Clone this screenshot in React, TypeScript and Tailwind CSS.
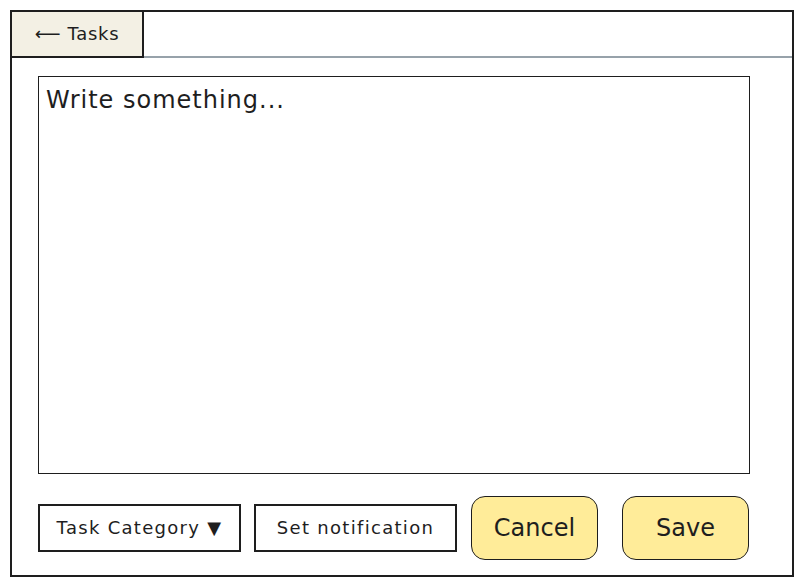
import React from "react";

export default function App() {
  const font = { fontFamily: '"DejaVu Sans", "Noto Sans", sans-serif' };
  return (
    <div className="w-[804px] h-[586px] bg-white p-[10px]" style={font}>
      <div className="w-[784px] h-[567px] border-2 border-[#1e1e1e] flex flex-col">
        <div className="flex h-[46px] shrink-0">
          <div className="w-[132px] bg-[#f3f0e4] border-r-2 border-b-2 border-[#1e1e1e] flex items-center justify-center pb-[2px] text-[18px] tracking-[0.7px] text-[#1e1e1e]">
            <span>⟵ Tasks</span>
          </div>
          <div className="flex-1 border-b-2 border-[#97a2aa]"></div>
        </div>
        <div className="flex-1 flex flex-col pl-[26px] pt-[18px]">
          <div className="w-[712px] h-[398px] border border-[#1e1e1e] px-[7px] pt-[6px] text-[24px] tracking-[1px] text-[#1e1e1e] leading-[34px]">
            Write something...
          </div>
          <div className="flex items-center mt-[22px] h-[64px]">
            <div className="w-[203px] h-[48px] border-2 border-[#1e1e1e] flex items-center justify-center pb-[2px] text-[18px] tracking-[1.3px] text-[#1e1e1e]">
              Task Category ▼
            </div>
            <div className="w-[203px] h-[48px] ml-[13px] border-2 border-[#1e1e1e] flex items-center justify-center pb-[2px] text-[18px] tracking-[1.3px] text-[#1e1e1e]">
              Set notification
            </div>
            <div className="w-[127px] h-[64px] ml-[14px] rounded-[14px] bg-[#ffec99] border border-[#1e1e1e] flex items-center justify-center text-[24px] text-[#1e1e1e]">
              Cancel
            </div>
            <div className="w-[127px] h-[64px] ml-[24px] rounded-[14px] bg-[#ffec99] border border-[#1e1e1e] flex items-center justify-center text-[24px] text-[#1e1e1e]">
              Save
            </div>
          </div>
        </div>
      </div>
    </div>
  );
}
